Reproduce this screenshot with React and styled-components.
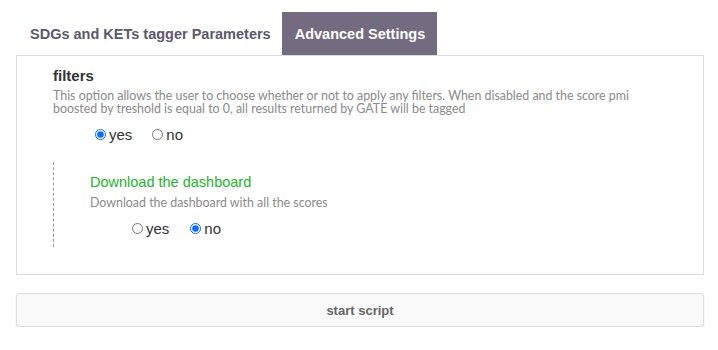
import React from "react";
import styled, { createGlobalStyle } from "styled-components";

const Global = createGlobalStyle`
  body {
    margin: 0;
    background: #fff;
    font-family: "Liberation Sans", Arial, sans-serif;
  }
  * {
    box-sizing: border-box;
  }
`;

const Page = styled.div`
  padding: 12px 14px 0 16px;
`;

const Tabs = styled.div`
  display: flex;
  height: 43px;
`;

const Tab = styled.div`
  display: flex;
  align-items: center;
  padding: ${props => (props.active ? "0 12px 0 13px" : "0 11px 0 14px")};
  font-size: 14.5px;
  font-weight: bold;
  color: ${props => (props.active ? "#ffffff" : "#5b596c")};
  background-color: ${props => (props.active ? "#736b80" : "transparent")};
`;

const Panel = styled.div`
  border: 1px solid #dcdcdc;
  height: 220px;
  padding: 10px 36px 0 36px;
`;

const Title = styled.div`
  font-size: 15px;
  font-weight: bold;
  color: #333;
  line-height: 20px;
`;

const Help = styled.div`
  font-family: Lato, "Liberation Sans", sans-serif;
  font-size: 12.4px;
  line-height: 13px;
  color: #8a8a8a;
  margin-top: ${props => props.top || 3}px;
  max-width: 610px;
`;

const Options = styled.div`
  display: flex;
  align-items: center;
  gap: ${props => props.gap}px;
  padding-left: ${props => props.indent}px;
  margin-top: ${props => props.top}px;
  font-size: 15px;
  color: #333;
`;

const Option = styled.label`
  display: flex;
  align-items: center;
`;

const Radio = styled.input.attrs({ type: "radio" })`
  margin: 0 3px 0 0;
  width: 11px;
  height: 11px;
  accent-color: #0b6cff;
`;

const Sub = styled.div`
  margin-top: 19px;
  border-left: 1px dashed #999;
  height: 85px;
  padding: 11px 0 0 36px;
`;

const SubTitle = styled.div`
  font-size: 14.5px;
  color: #22b52b;
  line-height: 18px;
`;

const Start = styled.button`
  display: block;
  width: 100%;
  height: 34px;
  margin-top: 18px;
  background: #f9f9f9;
  border: 1px solid #dedede;
  border-radius: 3px;
  box-shadow: 0 1px 2px rgba(0, 0, 0, 0.1);
  font-family: "Liberation Sans", Arial, sans-serif;
  font-size: 13px;
  font-weight: bold;
  color: #666;
`;

export default function App() {
  return (
    <Page>
      <Global />
      <Tabs>
        <Tab>SDGs and KETs tagger Parameters</Tab>
        <Tab active>Advanced Settings</Tab>
      </Tabs>
      <Panel>
        <Title>filters</Title>
        <Help>
          This option allows the user to choose whether or not to apply any filters. When disabled and the score pmi
          boosted by treshold is equal to 0, all results returned by GATE will be tagged
        </Help>
        <Options indent={42} top={11} gap={20}>
          <Option>
            <Radio name="filters" defaultChecked />
            yes
          </Option>
          <Option>
            <Radio name="filters" />
            no
          </Option>
        </Options>
        <Sub>
          <SubTitle>Download the dashboard</SubTitle>
          <Help top={5}>Download the dashboard with all the scores</Help>
          <Options indent={42} top={11} gap={21}>
            <Option>
              <Radio name="dashboard" />
              yes
            </Option>
            <Option>
              <Radio name="dashboard" defaultChecked />
              no
            </Option>
          </Options>
        </Sub>
      </Panel>
      <Start>start script</Start>
    </Page>
  );
}
